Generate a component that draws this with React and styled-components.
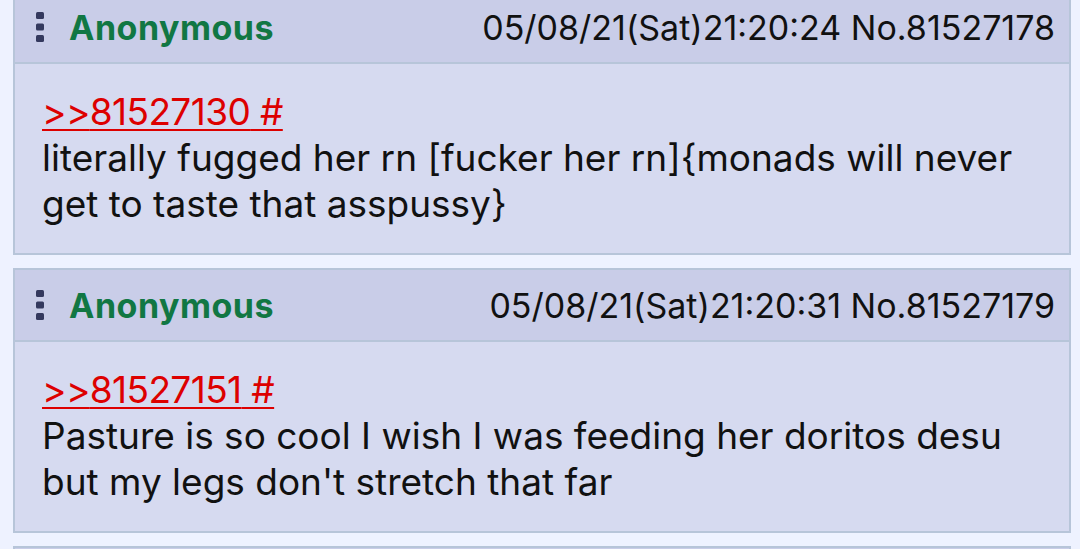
import React from 'react'
import styled, { createGlobalStyle } from 'styled-components'

const GlobalStyle = createGlobalStyle`
  html, body {
    margin: 0;
    padding: 0;
    background: #eef2ff;
    font-family: Inter, "Noto Sans", sans-serif;
    overflow: hidden;
  }
`

const Thread = styled.div`
  display: flex;
  flex-direction: column;
  gap: 13px;
  margin-top: -10px;
  padding: 0 9px 0 13px;
`

const Post = styled.div`
  background: #d6daf0;
  border: 2px solid #b7c5d9;
`

const Header = styled.div`
  display: flex;
  align-items: center;
  height: 72px;
  padding: 0 14px 0 20px;
  box-sizing: border-box;
  background: #c9cde8;
  border-bottom: 2px solid #b7c5d9;
`

const Menu = styled.svg`
  width: 10px;
  height: 32px;
  flex: none;
  margin-right: 24px;
`

const Name = styled.span`
  color: #117743;
  font-weight: 700;
  font-size: 34px;
  letter-spacing: 0.5px;
`

const Meta = styled.span`
  margin-left: auto;
  color: #111;
  font-size: 34px;
`

const Body = styled.div`
  padding: 25px 14px 26px 27px;
  font-size: 37px;
  line-height: 46px;
  color: #111;
`

const Quote = styled.a`
  display: block;
  color: #dd0000;
  letter-spacing: -0.6px;
  text-decoration: underline;
  text-decoration-thickness: 2px;
  text-underline-offset: 4px;
`

const posts = [
  {
    date: '05/08/21(Sat)21:20:24',
    no: '81527178',
    quote: '81527130',
    text: 'literally fugged her rn [fucker her rn]{monads will never get to taste that asspussy}',
  },
  {
    date: '05/08/21(Sat)21:20:31',
    no: '81527179',
    quote: '81527151',
    text: "Pasture is so cool I wish I was feeding her doritos desu but my legs don't stretch that far",
  },
]

const MenuIcon = () => (
  <Menu viewBox="0 0 10 32">
    <rect x="1" y="1" width="8" height="7" rx="1.5" fill="#34395e" />
    <rect x="1" y="12.5" width="8" height="7" rx="1.5" fill="#34395e" />
    <rect x="1" y="24" width="8" height="7" rx="1.5" fill="#34395e" />
  </Menu>
)

export default function App() {
  return (
    <>
      <GlobalStyle />
      <Thread>
        {posts.map((p) => (
          <Post key={p.no}>
            <Header>
              <MenuIcon />
              <Name>Anonymous</Name>
              <Meta>{p.date} No.{p.no}</Meta>
            </Header>
            <Body>
              <Quote href="#">&gt;&gt;{p.quote} #</Quote>
              {p.text}
            </Body>
          </Post>
        ))}
        {/* next post, only its top edge is in view */}
        <Post>
          <Header />
        </Post>
      </Thread>
    </>
  )
}
